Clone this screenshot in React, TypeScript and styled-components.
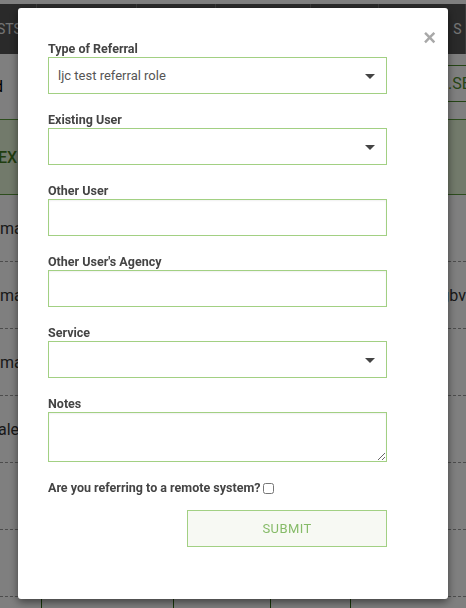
import React from "react";
import styled, { createGlobalStyle } from "styled-components";

const Global = createGlobalStyle`
  html, body { margin: 0; padding: 0; background: #ffffff; }
  body { font-family: Roboto, "Liberation Sans", sans-serif; overflow: hidden; }
  * { box-sizing: border-box; }
`;

const Page = styled.div`
  width: 466px;
  height: 608px;
  padding-top: 4px;
  background: #ffffff;
  overflow: hidden;
`;

const Nav = styled.div`
  height: 50px;
  background: #545454;
  display: flex;
  color: #ffffff;
  font-size: 14px;
`;

const NavItem = styled.div<{ $w: number; $align?: string }>`
  width: ${(p) => p.$w}px;
  flex: none;
  border-right: 1px solid #777;
  display: flex;
  align-items: center;
  justify-content: ${(p) => p.$align || "center"};
  overflow: hidden;
  white-space: nowrap;
  color: #e8e8e8;
`;

const NavText = styled.span<{ $ml?: number }>`
  margin-left: ${(p) => p.$ml ?? 0}px;
`;

const Toolbar = styled.div`
  height: 65px;
  display: flex;
  align-items: center;
  justify-content: space-between;
  font-size: 16px;
  color: #000;
`;

const ToolText = styled.span`
  margin-left: -6px;
`;

const ToolButton = styled.div`
  width: 60px;
  height: 37px;
  margin-right: -42px;
  border-top: 1px solid #4a8a2a;
  border-bottom: 1px solid #4a8a2a;
  color: #4e8a2c;
  display: flex;
  align-items: center;
  font-size: 16px;
  margin-bottom: 6px;
`;

const HeaderRow = styled.div`
  height: 76px;
  background: #e4f4d6;
  border-top: 1px solid #5a9a3a;
  border-bottom: 1px solid #5a9a3a;
  display: flex;
  align-items: center;
  justify-content: space-between;
  color: #3f7a1e;
  font-weight: 500;
  font-size: 16px;
`;

const HeaderText = styled.span`
  margin-left: -2px;
`;

const Row = styled.div`
  height: 67px;
  border-bottom: 1px dashed #999;
  display: flex;
  align-items: center;
  justify-content: space-between;
  font-size: 16px;
  color: #333;
`;

const RowText = styled.span<{ $ml?: number }>`
  margin-left: ${(p) => p.$ml ?? 0}px;
`;

const BottomBar = styled.div`
  display: flex;
  height: 20px;
`;

const BottomCell = styled.div<{ $w: number; $first?: boolean }>`
  width: ${(p) => p.$w}px;
  flex: none;
  border-left: ${(p) => (p.$first ? "none" : "1px solid #2f6a10")};
`;

const Overlay = styled.div`
  position: fixed;
  inset: 0;
  background: rgba(0, 0, 0, 0.5);
  padding: 8px 18px 0 18px;
`;

const Modal = styled.div`
  position: relative;
  width: 430px;
  height: 591px;
  background: #ffffff;
  border-radius: 3px;
  box-shadow: 0 3px 9px rgba(0, 0, 0, 0.5);
  padding: 33px 61px 0 30px;
`;

const Close = styled.button`
  position: absolute;
  top: 19px;
  right: 12px;
  border: none;
  background: none;
  padding: 0;
  font-family: "Liberation Sans", sans-serif;
  font-size: 22px;
  font-weight: 700;
  line-height: 1;
  color: #a8a8a8;
  cursor: pointer;
`;

const Form = styled.form`
  display: flex;
  flex-direction: column;
`;

const Group = styled.div<{ $mb?: number }>`
  display: flex;
  flex-direction: column;
  margin-bottom: ${(p) => p.$mb ?? 18}px;
`;

const Label = styled.label`
  font-size: 12.5px;
  line-height: 15px;
  font-weight: 700;
  color: #444;
  margin-bottom: 1px;
`;

const FieldBox = styled.div`
  position: relative;
  height: 37px;
  border: 1px solid #a2d083;
  display: flex;
  align-items: center;
  padding: 0 9px;
  font-size: 13px;
  color: #555;
  background: #fff;
`;

const Caret = styled.span`
  position: absolute;
  right: 11px;
  top: 16px;
  width: 0;
  height: 0;
  border-left: 5px solid transparent;
  border-right: 5px solid transparent;
  border-top: 5px solid #444;
`;

const TextInput = styled.input`
  height: 37px;
  border: 1px solid #a2d083;
  padding: 0 9px;
  font-family: Roboto, sans-serif;
  font-size: 13px;
  color: #555;
  outline: none;
  box-shadow: inset 0 1px 2px rgba(0, 0, 0, 0.06);
`;

const TextArea = styled.textarea`
  height: 50px;
  border: 1px solid #a2d083;
  padding: 6px 9px;
  font-family: Roboto, sans-serif;
  font-size: 13px;
  color: #555;
  outline: none;
  resize: vertical;
  display: block;
  box-shadow: inset 0 1px 2px rgba(0, 0, 0, 0.06);
`;

const CheckRow = styled.div`
  display: flex;
  align-items: center;
  height: 14px;
  margin-bottom: 15px;
`;

const CheckLabel = styled.label`
  font-size: 12.5px;
  font-weight: 700;
  color: #444;
  line-height: 14px;
`;

const Check = styled.input`
  width: 11px;
  height: 11px;
  margin: 0 0 0 3px;
`;

const Actions = styled.div`
  display: flex;
  justify-content: flex-end;
`;

const Submit = styled.button`
  width: 200px;
  height: 37px;
  border: 1px solid #a2d083;
  background: #f7f9f3;
  color: #86bb68;
  font-family: Roboto, sans-serif;
  font-size: 13px;
  letter-spacing: 0.4px;
  cursor: pointer;
`;

const Select = ({ value }: { value?: string }) => (
  <FieldBox>
    {value}
    <Caret />
  </FieldBox>
);

export default function App() {
  return (
    <>
      <Global />
      <Page>
        <Nav>
          <NavItem $w={37} $align="flex-start">
            <NavText $ml={-3}>STS</NavText>
          </NavItem>
          <NavItem $w={100} />
          <NavItem $w={79} />
          <NavItem $w={95} />
          <NavItem $w={68} />
          <NavItem $w={87} $align="flex-end">
            S&nbsp;
          </NavItem>
        </Nav>
        <Toolbar>
          <ToolText>d</ToolText>
          <ToolButton>.SE</ToolButton>
        </Toolbar>
        <HeaderRow>
          <HeaderText>EX</HeaderText>
          <span />
        </HeaderRow>
        <Row>
          <RowText $ml={0}>ma</RowText>
          <span />
        </Row>
        <Row>
          <RowText $ml={0}>ma</RowText>
          <RowText>gbv</RowText>
        </Row>
        <Row>
          <RowText $ml={0}>ma</RowText>
          <span />
        </Row>
        <Row>
          <RowText $ml={-2}>ale</RowText>
          <span />
        </Row>
        <Row />
        <Row />
        <BottomBar>
          <BottomCell $w={41} $first />
          <BottomCell $w={132} />
          <BottomCell $w={97} />
          <BottomCell $w={80} />
          <BottomCell $w={116} />
        </BottomBar>
      </Page>
      <Overlay>
        <Modal>
          <Close type="button">×</Close>
          <Form onSubmit={(e) => e.preventDefault()}>
            <Group>
              <Label>Type of Referral</Label>
              <Select value="ljc test referral role" />
            </Group>
            <Group>
              <Label>Existing User</Label>
              <Select />
            </Group>
            <Group>
              <Label>Other User</Label>
              <TextInput type="text" />
            </Group>
            <Group>
              <Label>Other User's Agency</Label>
              <TextInput type="text" />
            </Group>
            <Group>
              <Label>Service</Label>
              <Select />
            </Group>
            <Group $mb={19}>
              <Label>Notes</Label>
              <TextArea />
            </Group>
            <CheckRow>
              <CheckLabel>Are you referring to a remote system?</CheckLabel>
              <Check type="checkbox" />
            </CheckRow>
            <Actions>
              <Submit type="submit">SUBMIT</Submit>
            </Actions>
          </Form>
        </Modal>
      </Overlay>
    </>
  );
}
